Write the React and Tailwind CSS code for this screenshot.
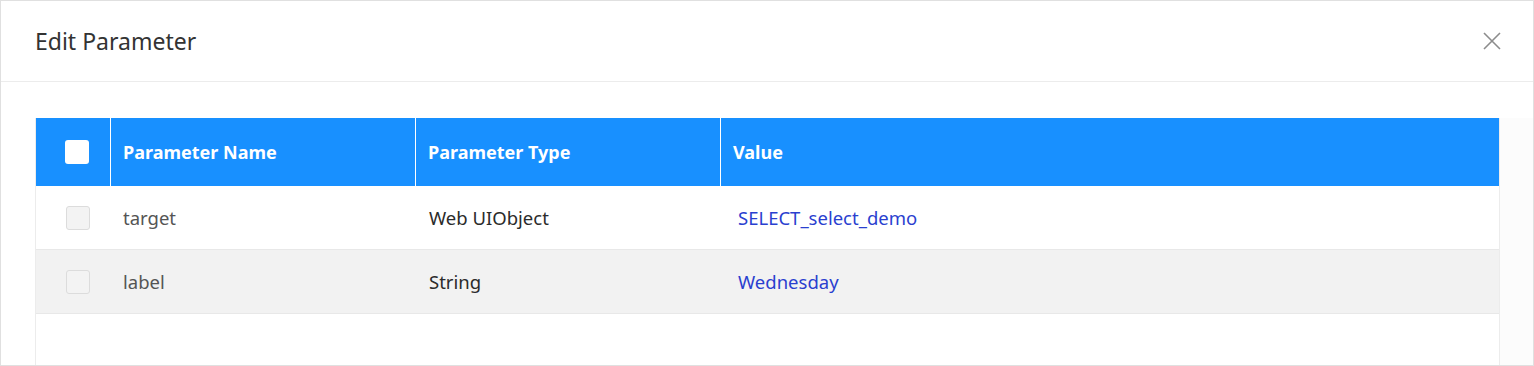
import React from 'react';

const rows = [
  { name: 'target', type: 'Web UIObject', value: 'SELECT_select_demo' },
  { name: 'label', type: 'String', value: 'Wednesday' },
];

export default function App() {
  return (
    <div className="w-[1534px] h-[366px] bg-white border border-[#e0e0e0] flex flex-col overflow-hidden font-['Noto_Sans',sans-serif]">
      {/* Header */}
      <div className="h-[81px] shrink-0 flex items-center justify-between pl-[34px] pr-[30px] border-b border-[#ececec]">
        <h2 className="text-[23px] text-[#333]">Edit Parameter</h2>
        <button className="w-[22px] h-[22px] flex items-center justify-center text-[#8c8c8c]">
          <svg width="20" height="20" viewBox="0 0 20 20" fill="none" stroke="currentColor" strokeWidth="1.6">
            <path d="M2 2L18 18M18 2L2 18" />
          </svg>
        </button>
      </div>

      {/* Body */}
      <div className="flex-1 flex pl-[34px] pt-[36px] bg-white">
        <div className="w-[1465px] flex flex-col border-x border-[#ececec]">
          <div className="h-[68px] flex bg-[#1890ff] text-white font-bold text-[18px]">
            <div className="w-[75px] flex items-center justify-center border-r border-white">
              <div className="w-[24px] h-[24px] bg-white rounded-[3px] ml-[8px]" />
            </div>
            <div className="w-[305px] flex items-center pl-[12px] border-r border-white">Parameter Name</div>
            <div className="w-[305px] flex items-center pl-[12px] border-r border-white">Parameter Type</div>
            <div className="flex-1 flex items-center pl-[12px]">Value</div>
          </div>
          {rows.map((r, i) => (
            <div key={r.name} className={`h-[64px] flex text-[18.5px] border-b border-[#e8e8e8] ${i % 2 ? 'bg-[#f2f2f2]' : 'bg-white'}`}>
              <div className="w-[76px] flex items-center justify-center">
                <div className="w-[24px] h-[24px] bg-[#f3f3f3] border border-[#dcdcdc] rounded-[3px] ml-[8px]" />
              </div>
              <div className="w-[305px] flex items-center pl-[11px] text-[#555]">{r.name}</div>
              <div className="w-[305px] flex items-center pl-[12px] text-[#2b2b2b]">{r.type}</div>
              <div className="flex-1 flex items-center pl-[16px] text-[#2a3fcf]">{r.value}</div>
            </div>
          ))}
        </div>
        <div className="flex-1 bg-[#fcfcfc]" />
      </div>
    </div>
  );
}
